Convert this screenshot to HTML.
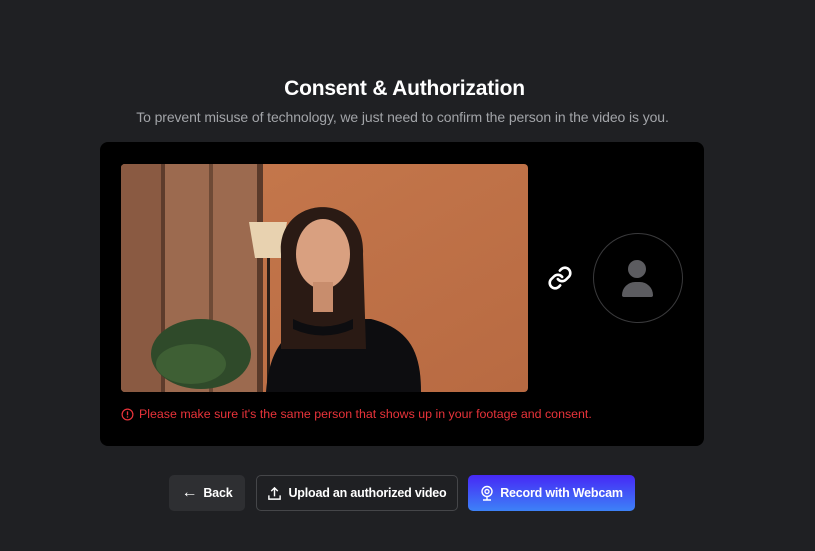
<!DOCTYPE html>
<html><head><style>
body{margin:0;width:815px;height:551px;background:#1f2023;font-family:"Liberation Sans",sans-serif;position:relative;overflow:hidden}
.t{position:absolute;left:0;width:815px;text-align:center}
.btn{position:absolute;top:475px;height:36px;border-radius:5px;color:#fff;font-size:12.5px;font-weight:bold;display:flex;align-items:center;justify-content:center;gap:6px;box-sizing:border-box;letter-spacing:-0.2px}
</style></head><body>
<div class="t" style="top:77px;font-size:21px;font-weight:bold;color:#fff;left:-3px;letter-spacing:-0.2px">Consent &amp; Authorization</div>
<div class="t" style="top:109px;font-size:14px;color:#a2a4a8;left:-5px;letter-spacing:-0.1px">To prevent misuse of technology, we just need to confirm the person in the video is you.</div>
<div style="position:absolute;left:100px;top:142px;width:604px;height:304px;background:#000;border-radius:8px"></div>
<svg style="position:absolute;left:121px;top:164px;border-radius:4px" width="407" height="228" viewBox="0 0 407 228">
<defs><linearGradient id="w" x1="0" x2="1" y1="0" y2="1"><stop offset="0" stop-color="#c6794d"/><stop offset="1" stop-color="#b86a42"/></linearGradient></defs>
<rect width="407" height="228" fill="url(#w)"/>
<rect width="140" height="228" fill="#9c6a4f"/>
<rect x="0" width="40" height="228" fill="#8a5a42"/>
<rect x="40" width="4" height="228" fill="#5e3c2c"/><rect x="88" width="4" height="228" fill="#6e4a36"/>
<rect x="136" width="6" height="228" fill="#5a3a2a"/>
<path d="M128 58 h38 l-6 36 h-26 z" fill="#e8d2b0"/>
<rect x="146" y="94" width="3" height="134" fill="#2a1e18"/>
<ellipse cx="80" cy="190" rx="50" ry="35" fill="#2f4a2a"/><ellipse cx="70" cy="200" rx="35" ry="20" fill="#3e5f34"/>
<path d="M145 228 C148 190 160 165 200 155 L250 155 C290 165 300 190 300 228Z" fill="#0d0d10"/>
<path d="M160 90 C155 30 245 25 242 90 L245 185 L160 185 Z" fill="#2a1a14"/>
<ellipse cx="202" cy="90" rx="27" ry="35" fill="#d9a080"/>
<rect x="192" y="118" width="20" height="30" fill="#c88d6d"/>
<path d="M172 155 Q202 170 232 155 L232 165 Q202 178 172 165Z" fill="#0d0d10"/>
</svg>
<svg style="position:absolute;left:547px;top:265px" width="26" height="26" viewBox="0 0 24 24" fill="none" stroke="#fff" stroke-width="2.4" stroke-linecap="round"><path d="M10 13a5 5 0 0 0 7.5.5l3-3a5 5 0 0 0-7-7l-1.7 1.7"/><path d="M14 11a5 5 0 0 0-7.5-.5l-3 3a5 5 0 0 0 7 7l1.7-1.7"/></svg>
<div style="position:absolute;left:593px;top:233px;width:88px;height:88px;border:1px solid #3a3a3c;border-radius:50%"></div>
<div style="position:absolute;left:628px;top:260px;width:18px;height:18px;border-radius:50%;background:#5c5c60"></div>
<div style="position:absolute;left:622px;top:282px;width:31px;height:15px;border-radius:14px 14px 2px 2px;background:#5c5c60"></div>
<div style="position:absolute;left:121px;top:407px;font-size:12.4px;color:#e8333a;display:flex;align-items:center;gap:5px"><svg width="13" height="13" viewBox="0 0 14 14"><circle cx="7" cy="7" r="5.8" fill="none" stroke="#e8333a" stroke-width="1.3"/><rect x="6.3" y="3.6" width="1.4" height="4.2" fill="#e8333a"/><rect x="6.3" y="9" width="1.4" height="1.4" fill="#e8333a"/></svg>Please make sure it's the same person that shows up in your footage and consent.</div>
<div class="btn" style="left:169px;width:76px;background:#2e2f32"><span style="font-size:16px;font-weight:normal">←</span>Back</div>
<div class="btn" style="left:256px;width:202px;border:1px solid #454649"><svg width="15" height="15" viewBox="0 0 16 16" fill="none" stroke="#fff" stroke-width="1.5"><path d="M2 10v4h12v-4M8 11V2M4.5 5.5 8 2l3.5 3.5"/></svg>Upload an authorized video</div>
<div class="btn" style="left:468px;width:167px;background:linear-gradient(#4628f6,#3d82f7)"><svg width="14" height="16" viewBox="0 0 14 16" fill="none" stroke="#fff" stroke-width="1.4"><circle cx="7" cy="6.5" r="5"/><circle cx="7" cy="6.5" r="2"/><path d="M3 15h8M7 11.5V15"/></svg>Record with Webcam</div>
</body></html>
